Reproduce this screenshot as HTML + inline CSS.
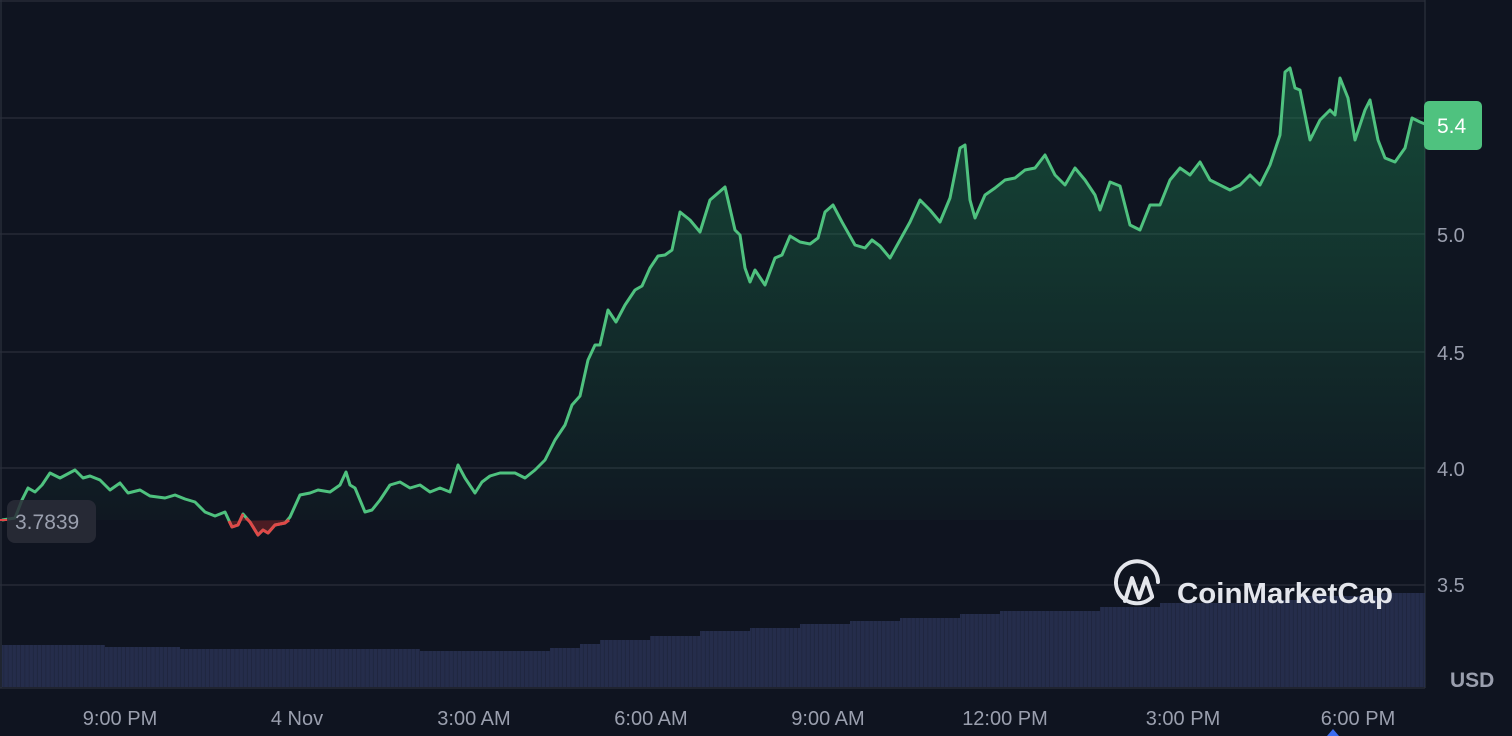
<!DOCTYPE html>
<html><head><style>
body{margin:0;background:#0f1420;width:1512px;height:736px;overflow:hidden;font-family:"Liberation Sans",sans-serif}
svg{display:block}
</style></head><body>
<svg width="1512" height="736" viewBox="0 0 1512 736">
<defs>
<linearGradient id="g" x1="0" y1="0" x2="0" y2="1"><stop offset="0" stop-color="#1e8a55" stop-opacity="0.45"/><stop offset="1" stop-color="#1e8a55" stop-opacity="0.02"/></linearGradient>
<pattern id="vb" width="4.2" height="10" patternUnits="userSpaceOnUse"><rect width="4.2" height="10" fill="#252d4b"/><rect x="3.6" width="0.6" height="10" fill="#1c2339"/></pattern>
</defs>
<rect width="1512" height="736" fill="#0f1420"/>
<g stroke="#2a2f3b" stroke-width="1.3">
<line x1="0" y1="118" x2="1425" y2="118"/><line x1="0" y1="234" x2="1425" y2="234"/><line x1="0" y1="352" x2="1425" y2="352"/><line x1="0" y1="468" x2="1425" y2="468"/><line x1="0" y1="585" x2="1425" y2="585"/>
<line x1="0" y1="1" x2="1425" y2="1"/><line x1="1425" y1="0" x2="1425" y2="688"/><line x1="1" y1="0" x2="1" y2="688"/><line x1="0" y1="688" x2="1425" y2="688"/>
</g>
<path d="M2,645 H105 V647 H180 V649 H420 V651 H550 V648 H580 V644 H600 V640 H650 V636 H700 V631 H750 V628 H800 V624 H850 V621 H900 V618 H960 V614 H1000 V611 H1100 V607 H1160 V603 H1250 V600 H1300 V596 H1380 V593 H1425 V687 H2 Z" fill="url(#vb)"/>
<path id="ln" d="M2,520 L15,518 22,500 28,488 35,492 42,485 50,473 60,478 75,470 83,478 90,476 100,480 110,490 120,483 128,493 140,490 150,496 165,498 175,495 185,499 195,502 205,512 215,516 225,512 232,527 238,525 243,514 250,522 258,535 263,530 268,533 275,525 285,523 290,517 300,495 310,493 318,490 330,492 340,485 346,472 350,485 355,488 365,512 372,510 380,500 390,485 400,482 410,488 420,485 430,492 440,488 450,492 458,465 465,478 475,493 482,482 490,476 500,473 515,473 525,478 535,470 545,460 555,440 565,425 572,405 580,396 588,360 595,345 600,345 608,310 616,322 625,305 635,290 642,286 650,268 658,256 665,255 672,250 680,212 690,220 700,232 710,200 725,187 735,230 740,235 745,268 750,282 755,270 765,285 775,258 782,255 790,236 800,242 810,244 818,238 825,212 833,205 842,222 855,245 865,248 872,240 880,246 890,258 900,240 910,222 920,200 930,210 940,222 950,198 960,148 965,145 970,200 975,218 985,195 995,188 1005,180 1015,178 1025,170 1035,168 1045,155 1055,175 1065,185 1075,168 1085,180 1095,195 1100,210 1110,182 1120,186 1130,225 1140,230 1150,205 1160,205 1170,180 1180,168 1190,175 1200,162 1210,180 1220,185 1230,190 1240,185 1250,175 1260,185 1270,165 1280,135 1285,72 1290,68 1295,88 1300,90 1310,140 1320,120 1330,110 1335,115 1340,78 1348,98 1355,140 1365,110 1370,100 1378,140 1385,158 1395,162 1405,148 1412,118 1420,122 1425,124" fill="none"/>
<path d="M2,520 L15,518 22,500 28,488 35,492 42,485 50,473 60,478 75,470 83,478 90,476 100,480 110,490 120,483 128,493 140,490 150,496 165,498 175,495 185,499 195,502 205,512 215,516 225,512 232,527 238,525 243,514 250,522 258,535 263,530 268,533 275,525 285,523 290,517 300,495 310,493 318,490 330,492 340,485 346,472 350,485 355,488 365,512 372,510 380,500 390,485 400,482 410,488 420,485 430,492 440,488 450,492 458,465 465,478 475,493 482,482 490,476 500,473 515,473 525,478 535,470 545,460 555,440 565,425 572,405 580,396 588,360 595,345 600,345 608,310 616,322 625,305 635,290 642,286 650,268 658,256 665,255 672,250 680,212 690,220 700,232 710,200 725,187 735,230 740,235 745,268 750,282 755,270 765,285 775,258 782,255 790,236 800,242 810,244 818,238 825,212 833,205 842,222 855,245 865,248 872,240 880,246 890,258 900,240 910,222 920,200 930,210 940,222 950,198 960,148 965,145 970,200 975,218 985,195 995,188 1005,180 1015,178 1025,170 1035,168 1045,155 1055,175 1065,185 1075,168 1085,180 1095,195 1100,210 1110,182 1120,186 1130,225 1140,230 1150,205 1160,205 1170,180 1180,168 1190,175 1200,162 1210,180 1220,185 1230,190 1240,185 1250,175 1260,185 1270,165 1280,135 1285,72 1290,68 1295,88 1300,90 1310,140 1320,120 1330,110 1335,115 1340,78 1348,98 1355,140 1365,110 1370,100 1378,140 1385,158 1395,162 1405,148 1412,118 1420,122 1425,124 L1425,520 L2,520 Z" fill="url(#g)"/>
<path d="M229,521 L232,527 238,525 243,514 250,522 258,535 263,530 268,533 275,525 285,523 289,520 Z" fill="#5a1e24" opacity="0.8"/>
<use href="#ln" stroke="#4fc27f" stroke-width="3" stroke-linejoin="round"/>
<polyline points="229,521 232,527 238,525 243,514" fill="none" stroke="#e04848" stroke-width="3" stroke-linejoin="round"/>
<polyline points="246,518 250,522 258,535 263,530 268,533 275,525 285,523 289,520" fill="none" stroke="#e04848" stroke-width="3" stroke-linejoin="round"/>
<line x1="0" y1="520" x2="8" y2="520" stroke="#e04848" stroke-width="2"/>
<rect x="7" y="500" width="89" height="43" rx="8" fill="#2a2d38" opacity="0.85"/>
<text x="15" y="529" font-size="21" fill="#9a9fae">3.7839</text>
<g font-size="20" fill="#9a9fae">
<text x="1437" y="242">5.0</text><text x="1437" y="360">4.5</text><text x="1437" y="476">4.0</text><text x="1437" y="592">3.5</text>
</g>
<rect x="1424" y="101" width="58" height="49" rx="5" fill="#4fc27f"/>
<text x="1437" y="133" font-size="21" fill="#fff">5.4</text>
<text x="1450" y="687" font-size="21" font-weight="bold" fill="#9a9fae">USD</text>
<g font-size="20" fill="#9a9fae" text-anchor="middle">
<text x="120" y="725">9:00 PM</text><text x="297" y="725">4 Nov</text><text x="474" y="725">3:00 AM</text><text x="651" y="725">6:00 AM</text><text x="828" y="725">9:00 AM</text><text x="1005" y="725">12:00 PM</text><text x="1183" y="725">3:00 PM</text><text x="1358" y="725">6:00 PM</text>
</g>
<path d="M1327,736 L1333,729 L1339,736 Z" fill="#3c6cf0"/>
<g stroke="#e4e6ec" stroke-width="4" fill="none" stroke-linecap="round" stroke-linejoin="round">
<path d="M1152,597 A21,21 0 1 1 1158,582"/>
<path d="M1125,601 L1132,578 L1139,598 L1146,578 L1152,596"/>
</g>
<text x="1177" y="603" font-size="29" font-weight="bold" fill="#e4e6ec" textLength="216" lengthAdjust="spacingAndGlyphs">CoinMarketCap</text>
</svg>
</body></html>
